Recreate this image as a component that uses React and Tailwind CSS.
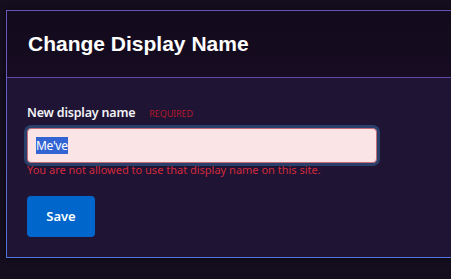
import React from "react";

export default function App() {
  return (
    <div className="w-[451px] h-[279px] overflow-hidden bg-[#150e1f] pt-[10px] pl-[6px]" style={{ fontFamily: '"Noto Sans", sans-serif' }}>
      <div className="w-[460px] p-px bg-gradient-to-b from-[#6a52bc] to-[#5274dc] shadow-[0_0_6px_rgba(0,0,0,0.6)]">
        <div className="flex h-[67px] items-center bg-gradient-to-b from-[#120a1d] to-[#170c21] pl-[21px] border-b border-[#5b48a8]">
          <h1 className="text-[21px] font-bold text-white" style={{ fontFamily: '"Liberation Sans", Arial, sans-serif' }}>
            Change Display Name
          </h1>
        </div>
        <div className="bg-[#1f1433] pl-[20px] pt-[26px] pb-[20px]">
          <div className="flex items-baseline gap-[14px] leading-[17px]">
            <span className="text-[12.5px] font-semibold text-[#f2f2f7] tracking-[-0.2px]">New display name</span>
            <span className="text-[9px] text-[#b3182c] uppercase tracking-[-0.1px]">Required</span>
          </div>
          <div className="mt-[6px] flex h-[35px] w-[350px] items-center rounded-[4px] border border-[#c46b78] bg-[#fae4e6] pl-[8px] shadow-[0_0_0_3px_#28406a]">
            <span className="bg-[#3264d4] text-[12px] leading-[17px] tracking-[-0.3px] text-white">Me've</span>
          </div>
          <p className="text-[11px] leading-[13px] text-[#d12a3d]">
            You are not allowed to use that display name on this site.
          </p>
          <button className="mt-[20px] h-[41px] w-[68px] rounded-[4px] bg-[#0066cc] text-[13px] font-semibold text-white">
            Save
          </button>
        </div>
      </div>
    </div>
  );
}
